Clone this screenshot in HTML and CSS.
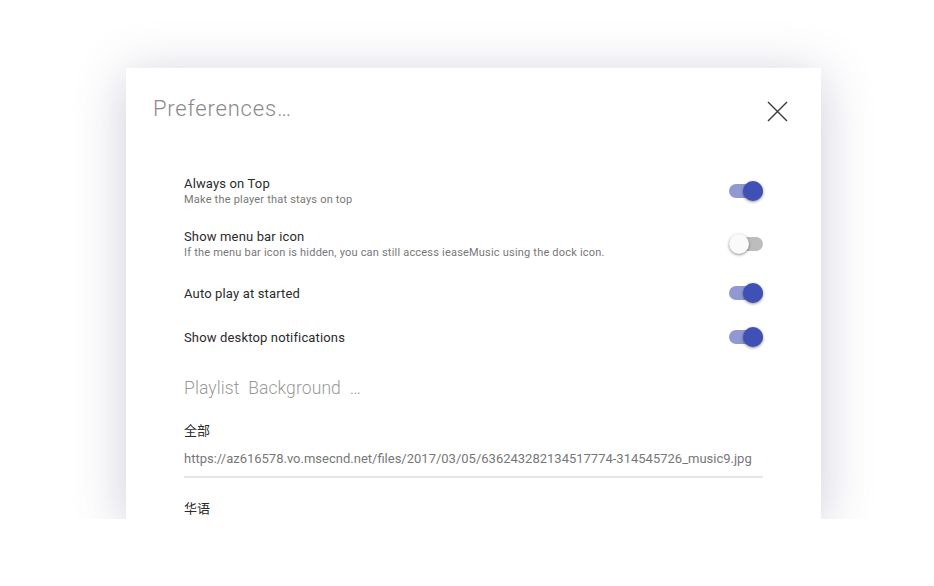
FILE: index.html
```html
<!DOCTYPE html>
<html>
<head>
<meta charset="utf-8">
<link rel="stylesheet" href="styles.css">
</head>
<body>
<div class="modal">
  <header class="modal-head">
    <h1 class="title">Preferences…</h1>
    <button class="close" aria-label="Close">
      <svg width="21" height="21" viewBox="0 0 21 21"><path d="M1 1 L20 20 M20 1 L1 20" stroke="#3a3a3a" stroke-width="1.4" fill="none"/></svg>
    </button>
  </header>
  <section class="content">
    <div class="row row-1">
      <div class="text">
        <p class="label">Always on Top</p>
        <p class="desc">Make the player that stays on top</p>
      </div>
      <span class="toggle on"><span class="thumb"></span></span>
    </div>
    <div class="row row-2">
      <div class="text">
        <p class="label">Show menu bar icon</p>
        <p class="desc">If the menu bar icon is hidden, you can still access ieaseMusic using the dock icon.</p>
      </div>
      <span class="toggle"><span class="thumb"></span></span>
    </div>
    <div class="row row-3">
      <div class="text">
        <p class="label">Auto play at started</p>
      </div>
      <span class="toggle on"><span class="thumb"></span></span>
    </div>
    <div class="row row-4">
      <div class="text">
        <p class="label">Show desktop notifications</p>
      </div>
      <span class="toggle on"><span class="thumb"></span></span>
    </div>
    <h2 class="section">Playlist&nbsp; Background&nbsp; …</h2>
    <div class="field">
      <p class="field-label">全部</p>
      <p class="field-input">https://az616578.vo.msecnd.net/files/2017/03/05/636243282134517774-314545726_music9.jpg</p>
    </div>
    <div class="field">
      <p class="field-label">华语</p>
    </div>
  </section>
</div>
</body>
</html>
```
FILE: styles.css
```css
html, body {
  margin: 0;
  padding: 0;
  background: #fff;
}
body {
  padding: 68px 0 0 126px;
  font-family: Roboto, "Noto Sans CJK SC", sans-serif;
}
.modal {
  width: 695px;
  height: 451px;
  background: #fff;
  box-shadow: 0 8px 48px rgba(96, 96, 140, 0.32);
  overflow: hidden;
  box-sizing: border-box;
}
.modal-head {
  display: flex;
  justify-content: space-between;
  align-items: flex-start;
  padding: 26px 33px 0 27px;
  height: 80px;
  box-sizing: border-box;
}
.title {
  margin: 0;
  font-family: Roboto, sans-serif;
  font-weight: 300;
  font-size: 22px;
  line-height: 30px;
  color: #8a8a8a;
  letter-spacing: 0.8px;
}
.close {
  margin: 7px 0 0 0;
  padding: 0;
  border: 0;
  background: none;
  width: 21px;
  height: 21px;
  display: block;
}
.close svg { display: block; }
.content {
  padding: 0 58px;
}
.row {
  display: flex;
  justify-content: space-between;
  align-items: center;
  height: 32px;
}
.row-1 { margin-top: 27px; }
.row-2 { margin-top: 21px; }
.row-3 { margin-top: 18px; }
.row-4 { margin-top: 12px; }
.label {
  margin: 0;
  font-size: 13px;
  line-height: 16px;
  color: #2b2b2b;
  letter-spacing: 0.15px;
}
.desc {
  margin: 1px 0 0;
  font-size: 11px;
  line-height: 14px;
  color: #777;
  letter-spacing: 0.2px;
}
.toggle {
  position: relative;
  width: 34px;
  height: 14px;
  border-radius: 7px;
  background: #bdbdbd;
  flex: none;
}
.row-3 .toggle,
.row-4 .toggle {
  margin-top: -2px;
}
.toggle .thumb {
  position: absolute;
  top: -3px;
  left: 0;
  width: 20px;
  height: 20px;
  border-radius: 50%;
  background: #fafafa;
  box-shadow: 0 1px 3px rgba(0,0,0,0.45);
}
.toggle.on {
  background: #9099d2;
}
.toggle.on .thumb {
  left: 14px;
  background: #3f51b5;
}
.section {
  margin: 22px 0 0;
  font-family: Roboto, sans-serif;
  font-weight: 300;
  font-size: 17.5px;
  line-height: 24px;
  color: #9a9a9a;
  letter-spacing: 0.1px;
}
.field {
  margin-top: 22px;
}
.field-label {
  margin: 0;
  font-size: 13px;
  line-height: 18px;
  color: #2b2b2b;
}
.field-input {
  margin: 9px 0 0;
  font-size: 13px;
  line-height: 20px;
  color: #777;
  padding-bottom: 7px;
  border-bottom: 2px solid #e6e6e6;
  white-space: nowrap;
  overflow: hidden;
}
.field + .field {
  margin-top: 22px;
}
```
